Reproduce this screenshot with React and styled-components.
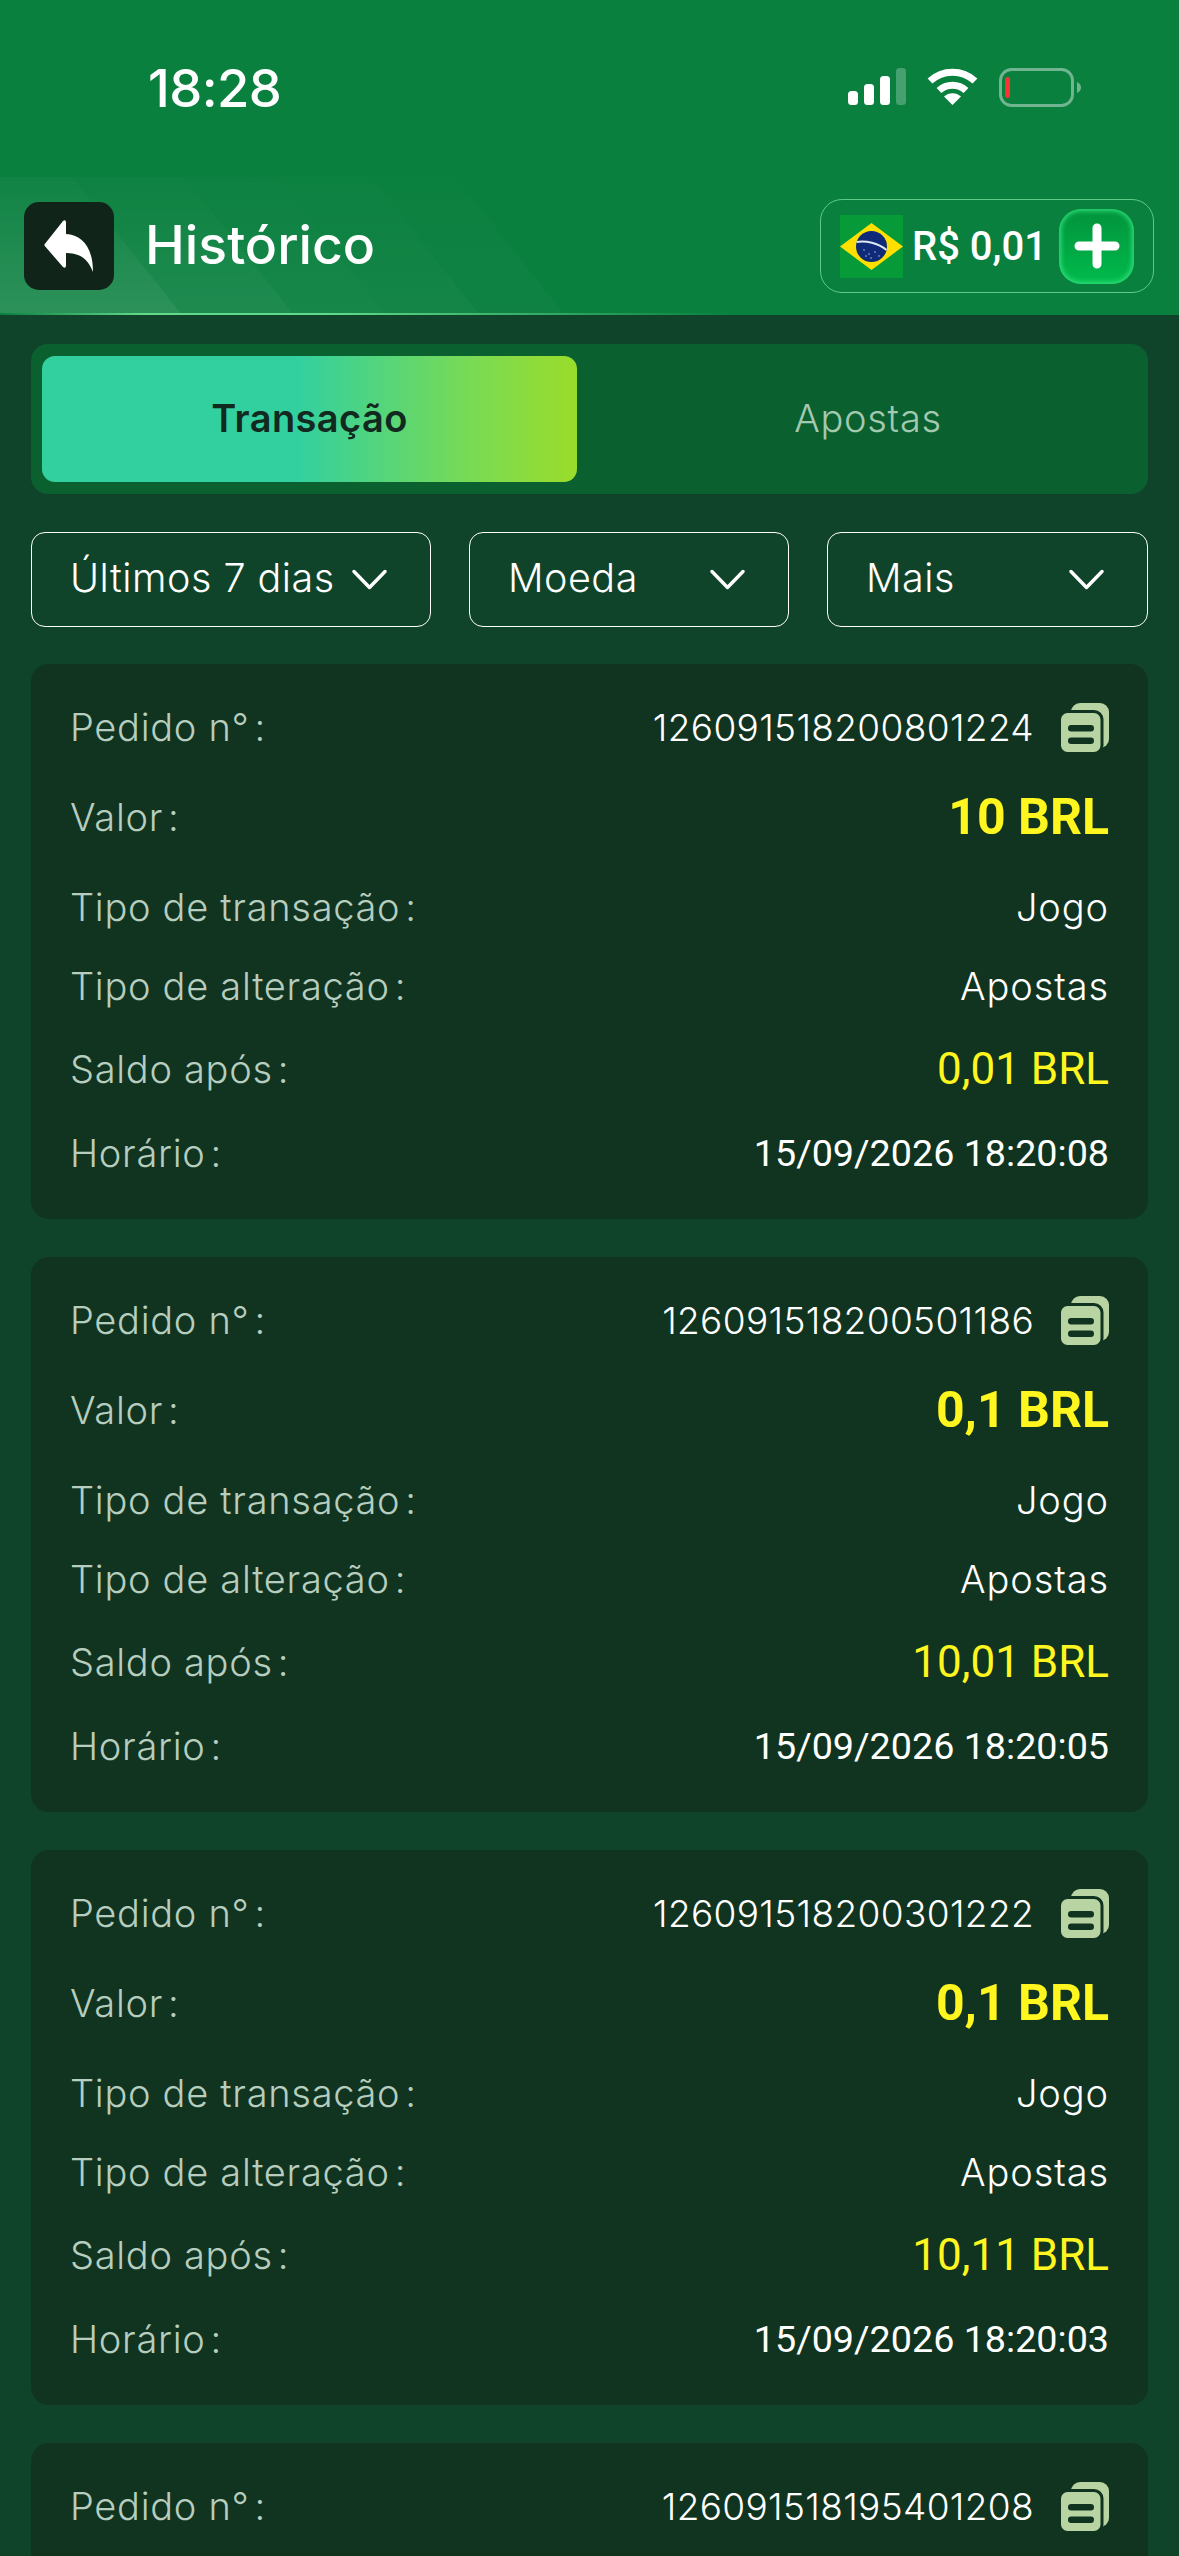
import React from "react";
import styled, { createGlobalStyle } from "styled-components";

const Global = createGlobalStyle`
  html, body { margin: 0; padding: 0; background: #10442a; }
  * { box-sizing: border-box; }
`;

const Page = styled.div`
  width: 1179px;
  height: 2556px;
  overflow: hidden;
  background: #10442a;
  font-family: Inter, "Liberation Sans", sans-serif;
  color: #fff;
`;

const Header = styled.header`
  position: relative;
  height: 315px;
  background: #0a803f;
  overflow: hidden;
  &::after {
    content: "";
    position: absolute;
    left: 0;
    right: 0;
    bottom: 0;
    height: 2px;
    background: linear-gradient(90deg, #0a803f 0%, #63d98b 12%, #63d98b 28%, #0a803f 62%);
  }
`;

const Stripes = styled.svg`
  position: absolute;
  left: 0;
  top: 177px;
`;

const StatusBar = styled.div`
  position: relative;
  height: 177px;
  display: flex;
  justify-content: space-between;
  align-items: flex-start;
  padding: 62px 98px 0 148px;
`;

const Clock = styled.div`
  font-size: 52.5px;
  line-height: 52px;
  font-weight: 500;
  letter-spacing: -0.6px;
`;

const StatusIcons = styled.div`
  display: flex;
  align-items: flex-start;
  gap: 21px;
  padding-top: 6px;
`;

const Nav = styled.div`
  position: relative;
  height: 138px;
  display: flex;
  align-items: center;
  padding: 0 25px 0 24px;
`;

const BackButton = styled.div`
  width: 90px;
  height: 88px;
  border-radius: 15px;
  background: #112419;
  display: flex;
  align-items: center;
  justify-content: center;
`;

const Title = styled.h1`
  margin: -3px 0 0 31px;
  flex: 1;
  font-size: 53.5px;
  line-height: 60px;
  font-weight: 500;
`;

const Balance = styled.div`
  width: 334px;
  height: 94px;
  border: 1.5px solid #5fca86;
  border-radius: 22px;
  display: flex;
  align-items: center;
  padding-left: 19px;
`;

const BalanceText = styled.span`
  margin-left: 9px;
  flex: 1;
  font-family: Roboto, sans-serif;
  font-size: 40px;
  font-weight: 500;
  white-space: nowrap;
`;

const AddButton = styled.div`
  width: 75px;
  height: 75px;
  margin-right: 19px;
  border-radius: 22px;
  background: linear-gradient(180deg, #02923b 0%, #00bb4c 100%);
  box-shadow: inset 0 0 5px 2px #2fe07a;
  display: flex;
  align-items: center;
  justify-content: center;
`;

const Content = styled.main`
  padding: 29px 31px 0;
`;

const Tabs = styled.div`
  height: 150px;
  border-radius: 17px;
  background: #0b6030;
  padding: 12px 11px;
  display: grid;
  grid-template-columns: 535px 1fr;
`;

const Tab = styled.div`
  display: flex;
  align-items: center;
  justify-content: center;
  border-radius: 13px;
  padding: ${(p) => (p.$active ? "0 0 3px" : "0 0 3px 22px")};
  font-size: 38px;
  background: ${(p) => (p.$active ? "linear-gradient(90deg, #33d09f 0%, #33d09f 48%, #7ddb50 82%, #9adc2a 100%)" : "none")};
  color: ${(p) => (p.$active ? "#12291f" : "#a3c9b0")};
  font-weight: ${(p) => (p.$active ? 600 : 300)};
  letter-spacing: ${(p) => (p.$active ? "0.4px" : "0.7px")};
`;

const Filters = styled.div`
  margin-top: 38px;
  display: grid;
  grid-template-columns: 400px 320px 321px;
  justify-content: space-between;
`;

const Filter = styled.div`
  height: 95px;
  border: 1.5px solid #fff;
  border-radius: 14px;
  display: flex;
  align-items: center;
  justify-content: space-between;
  padding: 0 43px 4px 38px;
  font-size: 39.5px;
  font-weight: 300;
  letter-spacing: 0.5px;
  & > svg {
    margin-top: 4px;
  }
`;

const List = styled.div`
  margin-top: 37px;
  display: flex;
  flex-direction: column;
  gap: 38px;
`;

const Card = styled.section`
  height: 555px;
  flex: none;
  background: #103420;
  border-radius: 18px;
  padding: 39px 39px 0;
  display: flex;
  flex-direction: column;
`;

const Row = styled.div`
  height: 48px;
  flex: none;
  margin-top: ${(p) => p.$gap}px;
  display: flex;
  align-items: center;
  justify-content: space-between;
`;

const Label = styled.span`
  font-size: 38px;
  font-weight: 300;
  letter-spacing: 0.7px;
  color: #b6cdbf;
`;

const Colon = styled.span`
  margin-left: 5px;
`;

const OrderValue = styled.div`
  display: flex;
  align-items: center;
  gap: 27px;
`;

const OrderNumber = styled.span`
  font-size: 37px;
  font-weight: 300;
  letter-spacing: 0.35px;
`;

const PlainValue = styled.span`
  font-size: 38px;
  font-weight: 300;
  letter-spacing: 0.9px;
`;

const Amount = styled.span`
  font-family: Roboto, sans-serif;
  font-size: 50px;
  font-weight: 700;
  color: #fff620;
`;

const Balanced = styled.span`
  font-family: Roboto, sans-serif;
  font-size: 44px;
  font-weight: 400;
  color: #fff620;
`;

const TimeValue = styled.span`
  font-family: Roboto, sans-serif;
  font-size: 37.7px;
  font-weight: 400;
`;

const Chevron = () => (
  <svg width="35" height="22" viewBox="0 0 35 22" fill="none">
    <path d="M2 2.5 L17.5 18.5 L33 2.5" stroke="#fff" strokeWidth="3.4" strokeLinecap="round" strokeLinejoin="round" />
  </svg>
);

const CopyIcon = () => (
  <svg width="48" height="49" viewBox="0 0 48 49">
    <rect x="10" y="0" width="38" height="45" rx="9" fill="#b9d4a3" />
    <rect x="-1.5" y="8.5" width="42.5" height="42" rx="8" fill="#b9d4a3" stroke="#103420" strokeWidth="3" />
    <rect x="7" y="22" width="26" height="6.5" rx="3.2" fill="#103420" />
    <rect x="7" y="34.5" width="26" height="6.5" rx="3.2" fill="#103420" />
  </svg>
);

const Signal = () => (
  <svg width="58" height="37" viewBox="0 0 58 37" fill="#fff">
    <rect x="0" y="23" width="10" height="14" rx="3.5" />
    <rect x="16" y="16" width="10" height="21" rx="3.5" />
    <rect x="32" y="8" width="10" height="29" rx="3.5" />
    <rect x="48" y="0" width="10" height="37" rx="3.5" opacity="0.25" />
  </svg>
);

const Wifi = () => (
  <svg width="51" height="37" viewBox="0 0 51 37" fill="none">
    <path d="M3 13 A33 33 0 0 1 48 13" stroke="#fff" strokeWidth="7" />
    <path d="M12 22.5 A20 20 0 0 1 39 22.5" stroke="#fff" strokeWidth="7" />
    <path d="M25.5 37 L17 28.5 A12.5 12.5 0 0 1 34 28.5 Z" fill="#fff" />
  </svg>
);

const Battery = () => (
  <svg width="82" height="39" viewBox="0 0 82 39" fill="none">
    <rect x="1.5" y="1.5" width="72" height="36" rx="11" stroke="#fff" strokeOpacity="0.42" strokeWidth="3" />
    <path d="M78 14 C80.5 15 82 17 82 19.5 C82 22 80.5 24 78 25 Z" fill="#fff" fillOpacity="0.42" />
    <rect x="6" y="9" width="5" height="21" rx="2.4" fill="#ff3030" />
  </svg>
);

const ReplyIcon = () => (
  <svg width="50" height="52" viewBox="0 0 50 52" fill="#fff">
    <path d="M0.8 24 L19 1 Q21.5 -0.8 22 2 L22 14 C38 15 49 27 49 52 C44 39 36 33 22 33 L22 46 Q21.5 48.8 19 47 L0.8 26 Q0 25 0.8 24 Z" />
  </svg>
);

const Flag = () => (
  <svg width="63" height="63" viewBox="0 0 63 63">
    <rect width="63" height="63" fill="#069a38" />
    <path d="M0 31.5 L31.5 8 L63 31.5 L31.5 55 Z" fill="#fedf00" />
    <circle cx="31.5" cy="31.5" r="15.5" fill="#0f2a78" />
    <path d="M16.5 27 C26 25.5 38 28 46.5 35" stroke="#dfe8ee" strokeWidth="2" fill="none" />
    <g fill="#cfdcf0">
      <circle cx="24" cy="35" r="0.7" />
      <circle cx="29" cy="39" r="0.7" />
      <circle cx="35" cy="37" r="0.7" />
      <circle cx="39" cy="41" r="0.7" />
      <circle cx="31" cy="43" r="0.7" />
      <circle cx="26" cy="41" r="0.7" />
    </g>
  </svg>
);

const Plus = () => (
  <svg width="46" height="46" viewBox="0 0 46 46">
    <path d="M23 5 V41 M5 23 H41" stroke="#fff" strokeWidth="9" strokeLinecap="round" />
  </svg>
);

const stripes = [
  { right: 182, alpha: 0.06 },
  { right: 294, alpha: 0.035 },
  { right: 385, alpha: 0.012 },
  { right: 480, alpha: 0.025 },
  { right: 565, alpha: 0.02 },
];

const records = [
  { id: "126091518200801224", amount: "10 BRL", balance: "0,01 BRL", time: "15/09/2026 18:20:08" },
  { id: "126091518200501186", amount: "0,1 BRL", balance: "10,01 BRL", time: "15/09/2026 18:20:05" },
  { id: "126091518200301222", amount: "0,1 BRL", balance: "10,11 BRL", time: "15/09/2026 18:20:03" },
  { id: "126091518195401208" },
];

export default function App() {
  return (
    <Page>
      <Global />
      <Header>
        <Stripes width="700" height="138" viewBox="0 0 700 138">
          <defs>
            <linearGradient id="fade" x1="0" y1="0" x2="0" y2="1">
              <stop offset="0" stopColor="#fff" stopOpacity="0.2" />
              <stop offset="1" stopColor="#fff" stopOpacity="1" />
            </linearGradient>
          </defs>
          {stripes.map((s) => (
            <polygon
              key={s.right}
              points={`-200,0 ${s.right - 110},0 ${s.right},138 -200,138`}
              fill="url(#fade)"
              opacity={s.alpha}
            />
          ))}
        </Stripes>
        <StatusBar>
          <Clock>18:28</Clock>
          <StatusIcons>
            <Signal />
            <Wifi />
            <Battery />
          </StatusIcons>
        </StatusBar>
        <Nav>
          <BackButton>
            <ReplyIcon />
          </BackButton>
          <Title>Histórico</Title>
          <Balance>
            <Flag />
            <BalanceText>R$ 0,01</BalanceText>
            <AddButton>
              <Plus />
            </AddButton>
          </Balance>
        </Nav>
      </Header>
      <Content>
        <Tabs>
          <Tab $active>Transação</Tab>
          <Tab>Apostas</Tab>
        </Tabs>
        <Filters>
          <Filter>Últimos 7 dias<Chevron /></Filter>
          <Filter>Moeda<Chevron /></Filter>
          <Filter>Mais<Chevron /></Filter>
        </Filters>
        <List>
          {records.map((r) => (
            <Card key={r.id}>
              <Row $gap={0}>
                <Label>Pedido n°<Colon>:</Colon></Label>
                <OrderValue>
                  <OrderNumber>{r.id}</OrderNumber>
                  <CopyIcon />
                </OrderValue>
              </Row>
              {r.amount && (
                <>
                  <Row $gap={42}>
                    <Label>Valor<Colon>:</Colon></Label>
                    <Amount>{r.amount}</Amount>
                  </Row>
                  <Row $gap={42}>
                    <Label>Tipo de transação<Colon>:</Colon></Label>
                    <PlainValue>Jogo</PlainValue>
                  </Row>
                  <Row $gap={31}>
                    <Label>Tipo de alteração<Colon>:</Colon></Label>
                    <PlainValue>Apostas</PlainValue>
                  </Row>
                  <Row $gap={35}>
                    <Label>Saldo após<Colon>:</Colon></Label>
                    <Balanced>{r.balance}</Balanced>
                  </Row>
                  <Row $gap={36}>
                    <Label>Horário<Colon>:</Colon></Label>
                    <TimeValue>{r.time}</TimeValue>
                  </Row>
                </>
              )}
            </Card>
          ))}
        </List>
      </Content>
    </Page>
  );
}
